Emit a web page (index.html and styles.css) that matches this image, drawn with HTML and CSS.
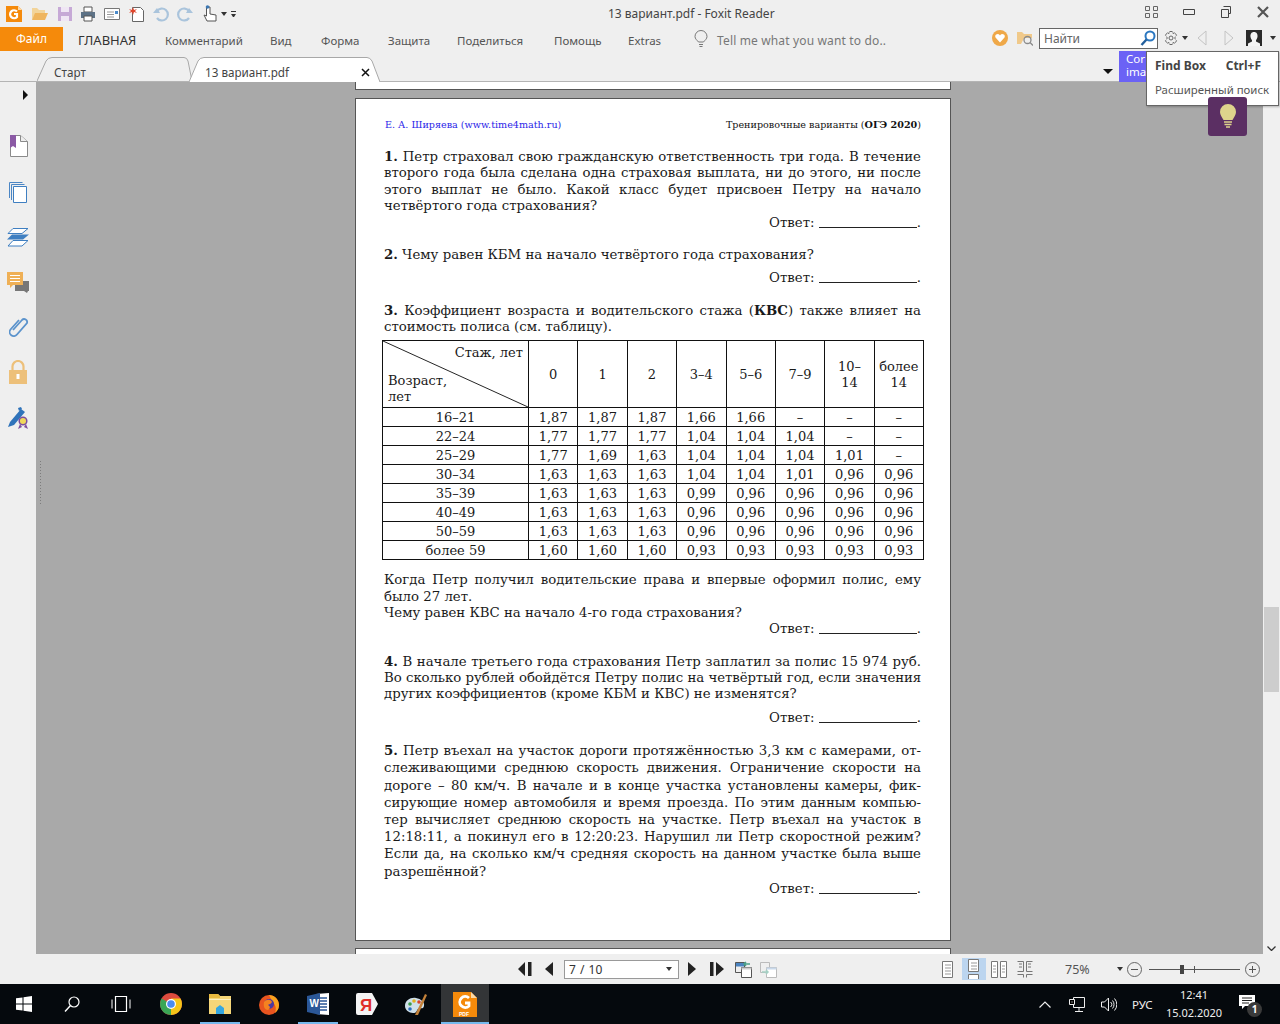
FILE: index.html
```html
<!DOCTYPE html>
<html lang="ru">
<head>
<meta charset="utf-8">
<title>13 вариант.pdf - Foxit Reader</title>
<link rel="stylesheet" href="styles.css">
</head>
<body>
<div class="app">
  <header class="titlebar">
    <div class="quick">
      <svg class="qi q-logo" viewBox="0 0 16 16"><path d="M0 0h12l4 4v12H0z" fill="#f58a0b"/><path d="M12 0l4 4h-4z" fill="#fbd9a8"/><path d="M11 5.500a4 4 0 1 0 0 5.500V8H8" fill="none" stroke="#fff" stroke-width="2.200"/></svg>
      <svg class="qi q-open" viewBox="0 0 16 16"><path d="M0 14V2h5l2 2h6v3H4z" fill="#f2d49a"/><path d="M0 14l3-7h13l-3 7z" fill="#efb55e"/></svg>
      <svg class="qi q-save" viewBox="0 0 16 16"><path d="M1 1h14v14H1z" fill="#c6a9d6"/><path d="M4 1h8v5H4zM4 10h8v5H4z" fill="#efe6f4"/></svg>
      <svg class="qi q-print" viewBox="0 0 16 16"><path d="M4 1h8v5H4z" fill="#fff" stroke="#555"/><path d="M1 6h14v6H1z" fill="#5d7286"/><path d="M4 10h8v5H4z" fill="#fff" stroke="#555"/></svg>
      <svg class="qi q-props" viewBox="0 0 16 16"><path d="M.500 2.500h15v11H.500z" fill="#fff" stroke="#777"/><path d="M3 6h7M3 8.500h7M3 11h7" stroke="#999"/><path d="M11 5h3v3h-3z" fill="#4b8bcb"/></svg>
      <svg class="qi q-new" viewBox="0 0 16 16"><path d="M3.500 1.500h8l3 3v11h-11z" fill="#fff" stroke="#666"/><path d="M4 1l1 3 3-1-2 2 2 2-3-1-1 3-1-3-3 1 2-2-2-2 3 1z" fill="#e0452c"/></svg>
      <svg class="qi q-undo" viewBox="0 0 16 16"><path d="M4 5a6 6 0 1 1 0 7" fill="none" stroke="#aac4dc" stroke-width="2.200"/><path d="M0 7h7L4 2z" fill="#aac4dc"/></svg>
      <svg class="qi q-redo" viewBox="0 0 16 16"><path d="M12 5a6 6 0 1 0 0 7" fill="none" stroke="#aac4dc" stroke-width="2.200"/><path d="M16 7H9l3-5z" fill="#aac4dc"/></svg>
      <svg class="qi q-hand" viewBox="0 0 17 17"><path d="M4.500 2v9L2 10l3 6h9v-6l-6-1V2z" fill="#fff" stroke="#555"/><circle cx="5.500" cy="2" r="1.800" fill="#3c78b4"/></svg>
      <i class="caret-down q-c1"></i>
      <i class="caret-bar"></i>
    </div>
    <div class="doc-title">13 вариант.pdf - Foxit Reader</div>
    <div class="winctl">
      <svg class="wi" viewBox="0 0 14 12"><path d="M.500.500h4v4h-4zM8.500.500h4v4h-4zM.500 7.500h4v4h-4zM8.500 7.500h4v4h-4z" fill="none" stroke="#666"/></svg>
      <svg class="wi" viewBox="0 0 14 12"><path d="M1.500 3.500h11v5h-11z" fill="none" stroke="#444"/></svg>
      <svg class="wi" viewBox="0 0 14 12"><path d="M4.500.500h7v7h-2M2.500 3.500h7v8h-7z" fill="none" stroke="#444"/></svg>
      <svg class="wi" viewBox="0 0 14 12"><path d="M2 1l10 10M12 1L2 11" stroke="#555" stroke-width="2.200" fill="none"/></svg>
    </div>
  </header>

  <nav class="ribbon">
    <div class="file-tab">Файл</div>
    <div class="rtab r1">ГЛАВНАЯ</div>
    <div class="rtab r2">Комментарий</div>
    <div class="rtab r3">Вид</div>
    <div class="rtab r4">Форма</div>
    <div class="rtab r5">Защита</div>
    <div class="rtab r6">Поделиться</div>
    <div class="rtab r7">Помощь</div>
    <div class="rtab r8">Extras</div>
    <svg class="tell-bulb" viewBox="0 0 14 18"><path d="M4.500 12C3 10 1 9 1 6.500a6 6 0 0 1 12 0C13 9 11 10 9.500 12zM5 14.500h4M5.500 16.500h3" fill="none" stroke="#777"/></svg>
    <div class="tell">Tell me what you want to do..</div>
    <div class="rib-right">
      <svg class="heart" viewBox="0 0 16 16"><circle cx="8" cy="8" r="8" fill="#efa848"/><path d="M8 12.500L3.500 7.500a2.400 2.400 0 0 1 4.500-2 2.400 2.400 0 0 1 4.500 2z" fill="#fff"/></svg>
      <svg class="fold" viewBox="0 0 16 16"><path d="M0 14V2h5l2 2h8v4H7l-3 6z" fill="#f0c98a"/><circle cx="10.500" cy="10" r="3.500" fill="none" stroke="#8a8a8a" stroke-width="1.300"/><path d="M13 12.500l3 3" stroke="#8a8a8a" stroke-width="1.300"/></svg>
      <div class="findbox"><span>Найти</span><svg viewBox="0 0 16 16"><circle cx="10" cy="6" r="4.500" fill="none" stroke="#2b77c0" stroke-width="2"/><path d="M6.500 9.500L1.500 15" stroke="#235f9c" stroke-width="2.400"/></svg></div>
      <svg class="gear" viewBox="0 0 14 16"><circle cx="7" cy="8" r="2" fill="none" stroke="#666"/><path d="M5.500 1.500h3l.5 2 2-.8 1.500 2.600L11 7v2l1.500 1.700L11 13.300l-2-.8-.5 2h-3l-.5-2-2 .8-1.500-2.600L3 9V7L1.500 5.300 3 2.700l2 .8z" fill="none" stroke="#666" stroke-dasharray="3 1"/></svg>
      <i class="caret-down c-gear"></i>
      <svg class="nav-l" viewBox="0 0 10 16"><path d="M9 1L1 8l8 7z" fill="none" stroke="#c4c4c4"/></svg>
      <svg class="nav-r" viewBox="0 0 10 16"><path d="M1 1l8 7-8 7z" fill="none" stroke="#c4c4c4"/></svg>
      <svg class="user" viewBox="0 0 16 16"><path d="M0 0h16v16H0z" fill="#2a2a2a"/><path d="M8 2c2.800 0 3.800 2.200 3.500 4.800-.2 1.500-.9 2.800-1.500 3.400v1.300l4 2v2.500H2v-2.500l4-2v-1.300c-.6-.6-1.300-1.900-1.500-3.400C4.200 4.200 5.200 2 8 2z" fill="#f4f4f4"/></svg>
      <i class="caret-down c-user"></i>
    </div>
  </nav>

  <div class="tabstrip">
    <div class="dtab dtab-idle">
      <svg class="tab-shape" viewBox="0 0 155 24" preserveAspectRatio="none"><path d="M0 24L9 4Q11 .5 15 .5H147Q150 .5 151 4L155 24" fill="#efefef" stroke="#a8a8a8"/></svg>
      <span>Старт</span>
    </div>
    <div class="dtab dtab-on">
      <svg class="tab-shape" viewBox="0 0 191 25" preserveAspectRatio="none"><path d="M0 25L9 4Q11 .5 15 .5H178Q181 .5 183 4L191 25" fill="#fff" stroke="#a8a8a8"/></svg>
      <span>13 вариант.pdf</span><svg class="tab-x" viewBox="0 0 9 9"><path d="M1 1l7 7M8 1L1 8" stroke="#111" stroke-width="1.500"/></svg>
    </div>
    <i class="caret-down c-tabs"></i>
  </div>

  <main class="workspace">
    <aside class="sidebar">
      <i class="side-arrow"></i>
      <svg class="si s1" viewBox="0 0 18 22"><path d="M.500.500h10l7 6v15H.500z" fill="#fff" stroke="#8a8a8a"/><path d="M10.500.500v6h7" fill="#eee" stroke="#8a8a8a"/><path d="M0 0h6v13l-3-2-3 2z" fill="#8b5aa5"/></svg>
      <svg class="si s2" viewBox="0 0 18 21"><path d="M.500 16V.500h13M2.500 18V2.500h13" fill="none" stroke="#4b86c5"/><path d="M4.500 4.500h13v16h-13z" fill="#fff" stroke="#3f7fc1"/></svg>
      <svg class="si s3" viewBox="0 0 22 19"><path d="M6 .500h15l-6 5H1z" fill="#fff" stroke="#3f7fc1"/><path d="M5 6.500h17l-6 5H0z" fill="#3f7fc1"/><path d="M6 12.500h15l-6 5.500H1z" fill="#fff" stroke="#3f7fc1"/></svg>
      <svg class="si s4" viewBox="0 0 22 21"><path d="M8 9h14v10h-1l-1 2-3-2H8z" fill="#777"/><path d="M0 0h16v13H6l-3 3v-3H0z" fill="#efb056"/><path d="M3 3.500h10M3 6.500h10M3 9.500h10" stroke="#fff"/></svg>
      <svg class="si s5" viewBox="0 0 20 21"><path d="M4 13L13 3a3 3 0 0 1 5 3L8 17.500a4 4 0 0 1-6.500-5L10 3" fill="none" stroke="#5b93cc" stroke-width="1.800"/></svg>
      <svg class="si s6" viewBox="0 0 18 24"><path d="M3.500 11V6.500a5.500 5.500 0 0 1 11 0V11" fill="none" stroke="#edc07a" stroke-width="2.200"/><path d="M0 10h18v14H0z" fill="#edc07a"/><path d="M7.500 14h3v5h-3z" fill="#fff"/></svg>
      <svg class="si s7" viewBox="0 0 20 22"><path d="M0 20l2-5L13 2l4 3L6 18z" fill="#2f73ba"/><path d="M10 1l3-1 1 2-3 2z" fill="#2f73ba"/><circle cx="15" cy="14" r="3.800" fill="#f0d85a" stroke="#7d4f9e" stroke-width="1.500"/><path d="M12 17l-2 5 4-2M18 17l2 5-4-2" fill="#7d4f9e"/></svg>
    </aside>
    <section class="canvas">
      <div class="grip"></div>
      <div class="page page-tail"></div>
      <article class="page page-main">
        <div class="runhead"><span class="rh-left">Е. А. Ширяева (www.time4math.ru)</span><span class="rh-right">Тренировочные варианты (<b>ОГЭ 2020</b>)</span></div>

        <div class="q q1">
          <p class="ln"><b>1.</b> Петр страховал свою гражданскую ответственность три года. В течение</p>
          <p class="ln">второго года была сделана одна страховая выплата, ни до этого, ни после</p>
          <p class="ln">этого выплат не было. Какой класс будет присвоен Петру на начало</p>
          <p class="ln end">четвёртого года страхования?</p>
        </div>
        <p class="ans">Ответ: <i class="blank"></i>.</p>

        <div class="q q2"><p class="ln end"><b>2.</b> Чему равен КБМ на начало четвёртого года страхования?</p></div>
        <p class="ans a2">Ответ: <i class="blank"></i>.</p>

        <div class="q q3">
          <p class="ln"><b>3.</b> Коэффициент возраста и водительского стажа (<b>КВС</b>) также влияет на</p>
          <p class="ln end">стоимость полиса (см. таблицу).</p>
        </div>

        <table class="kvs">
          <colgroup><col class="c0"><col span="8" class="cn"></colgroup>
          <thead>
            <tr>
              <th class="diag">
                <svg class="diag-line" viewBox="0 0 146 67" preserveAspectRatio="none"><path d="M0 0L146 67" stroke="#222" fill="none"/></svg>
                <span class="d-top">Стаж, лет</span>
                <span class="d-bot">Возраст,<br>лет</span>
              </th>
              <th>0</th><th>1</th><th>2</th><th>3–4</th><th>5–6</th><th>7–9</th><th>10–<br>14</th><th>более<br>14</th>
            </tr>
          </thead>
          <tbody>
            <tr><td>16–21</td><td>1,87</td><td>1,87</td><td>1,87</td><td>1,66</td><td>1,66</td><td>–</td><td>–</td><td>–</td></tr>
            <tr><td>22–24</td><td>1,77</td><td>1,77</td><td>1,77</td><td>1,04</td><td>1,04</td><td>1,04</td><td>–</td><td>–</td></tr>
            <tr><td>25–29</td><td>1,77</td><td>1,69</td><td>1,63</td><td>1,04</td><td>1,04</td><td>1,04</td><td>1,01</td><td>–</td></tr>
            <tr><td>30–34</td><td>1,63</td><td>1,63</td><td>1,63</td><td>1,04</td><td>1,04</td><td>1,01</td><td>0,96</td><td>0,96</td></tr>
            <tr><td>35–39</td><td>1,63</td><td>1,63</td><td>1,63</td><td>0,99</td><td>0,96</td><td>0,96</td><td>0,96</td><td>0,96</td></tr>
            <tr><td>40–49</td><td>1,63</td><td>1,63</td><td>1,63</td><td>0,96</td><td>0,96</td><td>0,96</td><td>0,96</td><td>0,96</td></tr>
            <tr><td>50–59</td><td>1,63</td><td>1,63</td><td>1,63</td><td>0,96</td><td>0,96</td><td>0,96</td><td>0,96</td><td>0,96</td></tr>
            <tr><td>более 59</td><td>1,60</td><td>1,60</td><td>1,60</td><td>0,93</td><td>0,93</td><td>0,93</td><td>0,93</td><td>0,93</td></tr>
          </tbody>
        </table>

        <div class="q q3b">
          <p class="ln">Когда Петр получил водительские права и впервые оформил полис, ему</p>
          <p class="ln end">было 27 лет.</p>
          <p class="ln end">Чему равен КВС на начало 4-го года страхования?</p>
        </div>
        <p class="ans a3b">Ответ: <i class="blank"></i>.</p>

        <div class="q q4">
          <p class="ln"><b>4.</b> В начале третьего года страхования Петр заплатил за полис 15 974 руб.</p>
          <p class="ln tight">Во сколько рублей обойдётся Петру полис на четвёртый год, если значения</p>
          <p class="ln end">других коэффициентов (кроме КБМ и КВС) не изменятся?</p>
        </div>
        <p class="ans a4">Ответ: <i class="blank"></i>.</p>

        <div class="q q5">
          <p class="ln"><b>5.</b> Петр въехал на участок дороги протяжённостью 3,3 км с камерами, от-</p>
          <p class="ln">слеживающими среднюю скорость движения. Ограничение скорости на</p>
          <p class="ln">дороге – 80 км/ч. В начале и в конце участка установлены камеры, фик-</p>
          <p class="ln">сирующие номер автомобиля и время проезда. По этим данным компью-</p>
          <p class="ln">тер вычисляет среднюю скорость на участке. Петр въехал на участок в</p>
          <p class="ln">12:18:11, а покинул его в 12:20:23. Нарушил ли Петр скоростной режим?</p>
          <p class="ln">Если да, на сколько км/ч средняя скорость на данном участке была выше</p>
          <p class="ln end">разрешённой?</p>
        </div>
        <p class="ans a5">Ответ: <i class="blank"></i>.</p>
      </article>
      <div class="page page-next"></div>
    </section>
    <div class="vscroll">
      <div class="vs-track"><div class="vs-thumb"></div></div>
      <svg class="vs-arrow" viewBox="0 0 9 5"><path d="M.500.500l4 4 4-4" fill="none" stroke="#333" stroke-width="1.300"/></svg>
    </div>
  </main>

  <footer class="statusbar">
    <svg class="pg p-first" viewBox="0 0 14 14"><path d="M7 0v14L0 7zM10 0h3.500v14H10z" fill="#222"/></svg>
    <svg class="pg p-prev" viewBox="0 0 8 14"><path d="M8 0v14L0 7z" fill="#222"/></svg>
    <div class="pagebox"><span>7 / 10</span><i class="caret-down"></i></div>
    <svg class="pg p-next" viewBox="0 0 8 14"><path d="M0 0v14l8-7z" fill="#222"/></svg>
    <svg class="pg p-last" viewBox="0 0 14 14"><path d="M0 0h3.500v14H0zM6 0v14l8-7z" fill="#222"/></svg>
    <svg class="pg p-back" viewBox="0 0 17 17"><path d="M.500 1.500h9v4h-9z" fill="#4a83c0"/><path d="M.500 1.500h9v10h-9z" fill="none" stroke="#555"/><path d="M6.500 6.500h10v10h-10z" fill="#fff" stroke="#555"/><path d="M6.500 6.500h10v2h-10z" fill="#ccc"/><path d="M15 3h-6M11 1L9 3l2 2" fill="none" stroke="#4aa088" stroke-width="1.500"/></svg>
    <svg class="pg p-fwd" viewBox="0 0 17 17"><path d="M.500 1.500h9v10h-9z" fill="none" stroke="#bbb"/><path d="M6.500 6.500h10v10h-10z" fill="#fff" stroke="#bbb"/><path d="M6.500 6.500h10v2h-10z" fill="#c8d8ea"/><path d="M2 11h6M6 9l2 2-2 2" fill="none" stroke="#a6d0c4" stroke-width="1.500"/></svg>
    <svg class="vw v1" viewBox="0 0 12 17"><path d="M.500.500h10v16h-10z" fill="#fff" stroke="#777"/><path d="M3 4h6M3 7h6M3 10h6M3 13h6" stroke="#999"/></svg>
    <div class="vw-on"><svg viewBox="0 0 12 20"><path d="M.500.500h10v12h-10zM.500 15.500h10v5h-10z" fill="#fff" stroke="#777"/><path d="M3 4h6M3 7h6M3 10h6" stroke="#999"/></svg></div>
    <svg class="vw v3" viewBox="0 0 16 17"><path d="M.500.500h6v16h-6zM9.500.500h6v16h-6z" fill="#fff" stroke="#777"/><path d="M2 5h3M2 8h3M2 11h3M11 5h3M11 8h3M11 11h3" stroke="#999"/></svg>
    <svg class="vw v4" viewBox="0 0 16 17"><path d="M.500.500h6v10h-6M15.500.500h-6v10h6M.500 13.500h6v3M15.500 13.500h-6v3M2 3h3M2 6h3M11 3h3M11 6h3" fill="none" stroke="#777"/></svg>
    <div class="zoomval">75%</div>
    <i class="caret-down c-zoom"></i>
    <svg class="zb" viewBox="0 0 15 15"><circle cx="7.500" cy="7.500" r="7" fill="none" stroke="#666"/><path d="M4 7.500h7" stroke="#555"/></svg>
    <div class="slider"><i class="knob"></i><i class="tick"></i></div>
    <svg class="zb zb-plus" viewBox="0 0 15 15"><circle cx="7.500" cy="7.500" r="7" fill="none" stroke="#666"/><path d="M4 7.500h7M7.500 4v7" stroke="#555"/></svg>
  </footer>

  <footer class="taskbar">
    <div class="tb-cell w48"><svg class="ti16" viewBox="0 0 16 16"><path d="M0 2.300L6.500 1.400v6.100H0zM7.500 1.300L16 0v7.500H7.500zM0 8.500h6.500v6.100L0 13.700zM7.500 8.500H16V16l-8.500-1.300z" fill="#fff"/></svg></div>
    <div class="tb-cell w48"><svg class="ti16" viewBox="0 0 16 16"><circle cx="10" cy="6" r="5" fill="none" stroke="#fff" stroke-width="1.200"/><path d="M6.500 9.500L1 15.500" stroke="#fff" stroke-width="1.400"/></svg></div>
    <div class="tb-cell w51"><svg class="ti20" viewBox="0 0 20 16"><path d="M4.500.500h11v15h-11z" fill="none" stroke="#fff" stroke-width="1.200"/><path d="M1 3.500v9M19 3.500v9" stroke="#fff"/></svg></div>
    <div class="tb-cell"><svg class="ti22" viewBox="0 0 22 22"><circle cx="11" cy="11" r="11" fill="#dd4b3e"/><path d="M11 11L1.500 5.500A11 11 0 0 0 11 22z" fill="#3aa655"/><path d="M11 11v11A11 11 0 0 0 20.500 5.500H11z" fill="#f5c518"/><circle cx="11" cy="11" r="5" fill="#fff"/><circle cx="11" cy="11" r="3.800" fill="#4a8bf0"/></svg></div>
    <div class="tb-cell running"><svg class="ti22" viewBox="0 0 22 22"><path d="M0 1h9l2 2h11v18H0z" fill="#f5d678"/><path d="M0 1h9l2 2v2H0z" fill="#e8b93f"/><path d="M0 6h22v1H0z" fill="#fdf0c0"/><path d="M7 15l4-3 4 3v6H7z" fill="#35a7e0"/></svg></div>
    <div class="tb-cell"><svg class="ti22" viewBox="0 0 22 22"><circle cx="11" cy="12" r="10" fill="#e8541f"/><path d="M11 2c5 0 10 4 10 10 0 4-2 6-4 8 2-5 0-9-3-12-1-2-2-4-3-6z" fill="#f9a21f"/><circle cx="11" cy="11" r="5" fill="#4a3aa0"/><path d="M6 9c2-3 7-3 8 0-1 2-3 2-4 3 2 1 3 3 0 5-3 0-5-3-4-8z" fill="#f58220"/></svg></div>
    <div class="tb-cell running"><svg class="ti22" viewBox="0 0 22 22"><path d="M9 1l13-1v22l-13-1z" fill="#fff"/><path d="M12 5h8M12 8h8M12 11h8M12 14h8M12 17h8" stroke="#2b5797" stroke-width="1.400"/><path d="M0 3l13-3v22L0 19z" fill="#2b5797"/><text x="2.500" y="14" class="word-w">W</text></svg></div>
    <div class="tb-cell"><svg class="ti22" viewBox="0 0 22 22"><path d="M2 0h14l6 11-6 11H2a2 2 0 0 1-2-2V2a2 2 0 0 1 2-2z" fill="#f4f4f4"/><text x="4" y="18" class="ya">Я</text></svg></div>
    <div class="tb-cell"><svg class="ti22" viewBox="0 0 22 22"><path d="M0 13C0 7 6 4 11 5s9 4 8 8-4 1-6 3-1 4-5 4-8-3-8-7z" fill="#cfe0ea"/><circle cx="5" cy="11" r="1.800" fill="#3a9c4a"/><circle cx="9" cy="8" r="1.800" fill="#e0b020"/><circle cx="14" cy="9" r="1.800" fill="#d8432f"/><circle cx="5" cy="16" r="1.800" fill="#2c6fc0"/><path d="M10 22L20 1l2 1-9 20z" fill="#c4823a"/></svg></div>
    <div class="tb-cell running active"><svg class="ti24" viewBox="0 0 24 25"><path d="M0 0h18l6 6v19H0z" fill="#f58a0b"/><path d="M18 0l6 6h-6z" fill="#fbd9a8"/><path d="M16 6a5.500 5.500 0 1 0 0 8v-3h-4" fill="none" stroke="#fff" stroke-width="2.800"/><text x="6" y="23.500" class="pdf-t">PDF</text></svg></div>
    <div class="tray">
      <svg class="tr-chev" viewBox="0 0 12 7"><path d="M.500 6.500L6 1l5.500 5.500" fill="none" stroke="#eee" stroke-width="1.200"/></svg>
      <svg class="tr-net" viewBox="0 0 16 15"><path d="M4.500.500h11v10h-11zM10 11v3M6 14.500h8" fill="none" stroke="#eee"/><path d="M0 2h6v6H0z" fill="#000"/><path d="M.500 2.500h5v5h-5zM3 4.500v1" fill="none" stroke="#eee"/></svg>
      <svg class="tr-vol" viewBox="0 0 16 15"><path d="M.500 5h3l4-4v13l-4-4h-3z" fill="none" stroke="#eee"/><path d="M9.500 5a3 3 0 0 1 0 5M11.500 3.500a6 6 0 0 1 0 8M13.500 1.500a9 9 0 0 1 0 12" fill="none" stroke="#eee"/></svg>
      <span class="tr-lang">РУС</span>
      <div class="clock"><span>12:41</span><span>15.02.2020</span></div>
      <div class="notif"><svg viewBox="0 0 16 15"><path d="M0 0h16v11H6l-3 3v-3H0z" fill="#fff"/><path d="M3 3h10M3 5.500h10M3 8h7" stroke="#222"/></svg><b class="badge">1</b></div>
    </div>
  </footer>

  <div class="promo">Cor<br>ima</div>
  <div class="findmenu">
    <div class="fm-row"><b>Find Box</b><b>Ctrl+F</b></div>
    <div class="fm-adv">Расширенный поиск</div>
  </div>
  <div class="tipbulb"><svg viewBox="0 0 16 26"><path d="M3.500 16C2 13 0 11 0 8a8 8 0 0 1 16 0c0 3-2 5-3.500 8z" fill="#ded38c"/><path d="M4 18h8M4.500 20.500h7M6 23h4" stroke="#ded38c" stroke-width="1.600"/></svg></div>
</div>
</body>
</html>
```

FILE: styles.css
```css
* { box-sizing: border-box; }
html, body { margin: 0; height: 100%; overflow: hidden; }
body { font-family: "Noto Sans", "DejaVu Sans", sans-serif; font-size: 12px; color: #444; background: #efefef; }
svg { display: block; flex: none; }
i { display: block; font-style: normal; }

.app { position: relative; display: flex; flex-direction: column; width: 1280px; height: 1024px; overflow: hidden; }

.caret-down { width: 0; height: 0; border-left: 4px solid transparent; border-right: 4px solid transparent; border-top: 4px solid #333; flex: none; }

/* Title bar */
.titlebar { display: flex; align-items: center; height: 27px; flex: none; background: #efefef; }
.quick { display: flex; align-items: center; width: 608px; height: 100%; flex: none; }
.qi { width: 16px; height: 16px; }
.q-logo { margin-left: 6px; }
.q-open { margin-left: 10px; }
.q-save { margin-left: 9px; }
.q-print { margin-left: 7px; }
.q-props { margin-left: 8px; }
.q-new { margin-left: 9px; }
.q-undo { margin-left: 8px; }
.q-redo { margin-left: 8px; }
.q-hand { margin-left: 9px; width: 17px; height: 17px; }
.q-c1 { margin-left: 2px; border-left-width: 3px; border-right-width: 3px; }
.caret-bar { width: 5px; height: 6px; margin-left: 4px; border-top: 1px solid #333; position: relative; }
.caret-bar::after { content: ""; display: block; margin-top: 2px; border-left: 2.500px solid transparent; border-right: 2.500px solid transparent; border-top: 3px solid #333; }
.doc-title { color: #444; white-space: nowrap; }
.winctl { margin-left: auto; display: flex; gap: 23px; padding-right: 10px; align-items: center; margin-top: -4px; }
.wi { width: 14px; height: 12px; }

/* Ribbon */
.ribbon { display: flex; align-items: center; height: 24px; flex: none; background: #efefef; }
.file-tab { width: 63px; height: 24px; line-height: 24px; text-align: center; background: #f58a0b; color: #fff; flex: none; }
.rtab { flex: none; white-space: nowrap; color: #555; font-size: 11.500px; padding-top: 2px; }
.r1 { width: 87px; margin-left: 15px; font-size: 13px; color: #333; }
.r2 { width: 105px; }
.r3 { width: 51px; }
.r4 { width: 67px; }
.r5 { width: 69px; }
.r6 { width: 97px; }
.r7 { width: 74px; }
.r8 { width: 66px; }
.tell-bulb { width: 14px; height: 18px; }
.tell { margin-left: 9px; color: #777; white-space: nowrap; letter-spacing: .15px; padding-top: 2px; }
.rib-right { display: flex; align-items: center; margin-left: auto; height: 100%; position: relative; top: -1px; }
.heart { width: 16px; height: 16px; }
.fold { width: 16px; height: 16px; margin-left: 9px; }
.findbox { width: 119px; height: 21px; margin-left: 6px; border: 1px solid #666; background: #fff; display: flex; align-items: center; justify-content: space-between; padding: 0 1px 0 4px; color: #666; }
.findbox svg { width: 16px; height: 16px; }
.gear { width: 14px; height: 16px; margin-left: 6px; }
.c-gear { margin-left: 4px; border-left-width: 3px; border-right-width: 3px; }
.nav-l { width: 10px; height: 16px; margin-left: 9px; }
.nav-r { width: 10px; height: 16px; margin-left: 17px; }
.user { width: 16px; height: 16px; margin-left: 12px; }
.c-user { margin-left: 8px; margin-right: 4px; border-left-width: 3px; border-right-width: 3px; }

/* Document tabs */
.tabstrip { display: flex; align-items: flex-end; height: 31px; flex: none; padding-left: 37px; background: #efefef; border-bottom: 1px solid #b4b4b4; position: relative; }
.dtab { position: relative; height: 24px; display: flex; align-items: center; color: #444; font-size: 11.700px; }
.tab-shape { position: absolute; left: 0; top: 0; width: 100%; height: 100%; }
.dtab > span, .tab-x { position: relative; }
.dtab-idle { width: 155px; padding: 5px 0 0 17px; }
.dtab-on { width: 191px; margin-left: -3px; padding: 4px 10px 0 16px; justify-content: space-between; margin-bottom: -1px; height: 25px; }
.tab-x { width: 9px; height: 9px; margin-top: 2px; }
.c-tabs { margin-left: 723px; margin-bottom: 7px; border-left-width: 5px; border-right-width: 5px; border-top-width: 5px; border-top-color: #111; }

/* Workspace */
.workspace { display: flex; flex: 1; min-height: 0; }
.sidebar { width: 36px; flex: none; background: #efefef; display: flex; flex-direction: column; }
.side-arrow { margin: 8px 0 0 23px; width: 0; height: 0; border-top: 5px solid transparent; border-bottom: 5px solid transparent; border-left: 5px solid #111; }
.si { width: 18px; height: 22px; }
.s1 { margin: 35px 0 0 10px; width: 18px; height: 22px; }
.s2 { margin: 25px 0 0 9px; width: 18px; height: 21px; }
.s3 { margin: 25px 0 0 7px; width: 22px; height: 19px; }
.s4 { margin: 25px 0 0 7px; width: 22px; height: 21px; }
.s5 { margin: 24px 0 0 9px; width: 20px; height: 21px; }
.s6 { margin: 22px 0 0 9px; width: 18px; height: 24px; }
.s7 { margin: 23px 0 0 8px; width: 20px; height: 22px; }

.canvas { flex: 1; min-width: 0; background: #a9a9a9; position: relative; overflow: hidden; display: flex; flex-direction: column; align-items: flex-start; padding-left: 319px; }
.grip { position: absolute; left: 3px; top: 378px; width: 3px; height: 44px; background-image: radial-gradient(circle, #7c7c7c 0.8px, transparent 1px); background-size: 3px 3px; }
.page { width: 596px; background: #fff; border: 1px solid #555; flex: none; }
.page-tail { height: 8px; border-top: 0; }
.page-main { height: 843px; margin-top: 8px; padding: 20px 29px 0 28px; font-family: "DejaVu Serif", "Liberation Serif", serif; font-size: 13.300px; color: #1a1a1a; }
.page-next { height: 60px; margin-top: 7px; }

.runhead { display: flex; justify-content: space-between; height: 12px; font-size: 9.600px; line-height: 12px; margin-bottom: 18px; white-space: nowrap; }
.rh-left { color: #2a1ee8; padding-left: 1px; }
.rh-right { color: #111; }

.q p, .ans { margin: 0; }
.ln { line-height: 16.400px; text-align: justify; text-align-last: justify; white-space: normal; }
.ln.end { text-align-last: left; }
.ln.tight { letter-spacing: -.1px; }
.ans { line-height: 16.400px; text-align: right; }
.blank { display: inline-block; width: 98px; height: 1px; background: #222; vertical-align: -1px; }
.q2 { margin-top: 15.600px; }
.a2 { margin-top: 6.600px; }
.q3 { margin-top: 16.600px; }
.q3b { margin-top: 12.500px; }
.a3b { margin-top: -1px; }
.q4 { margin-top: 16.600px; }
.a4 { margin-top: 6.800px; }
.q5 { margin-top: 16.200px; }
.q5 .ln { line-height: 17.200px; }
.a5 { margin-top: 1px; }

.kvs { border-collapse: collapse; table-layout: fixed; width: 541px; margin: 4.400px 0 0 -2px; font-size: 13px; color: #1a1a1a; }
.c0 { width: 146px; }
.cn { width: 49.375px; }
.kvs th, .kvs td { border: 1px solid #111; padding: 0; text-align: center; font-weight: 400; line-height: 16px; }
.kvs td { height: 18.900px; line-height: 17px; padding-top: 1px; }
.kvs thead th { height: 67px; padding-top: 2px; }
.diag { position: relative; }
.diag-line { position: absolute; left: 0; top: 0; width: 100%; height: 100%; }
.d-top { position: absolute; right: 5px; top: 4px; }
.d-bot { position: absolute; left: 5px; bottom: 2px; text-align: left; }

/* Scrollbar */
.vscroll { width: 17px; flex: none; background: #f0f0f0; display: flex; flex-direction: column; align-items: center; }
.vs-track { flex: 1; width: 100%; }
.vs-thumb { margin: 525px 1px 0; height: 85px; background: #cdcdcd; }
.vs-arrow { width: 9px; height: 5px; margin: 0 0 3px; }

/* Status bar */
.statusbar { display: flex; align-items: center; height: 30px; flex: none; background: #efefef; }
.pg { height: 14px; }
.p-first { width: 14px; margin-left: 518px; }
.p-prev { width: 8px; margin-left: 13px; }
.pagebox { width: 115px; height: 19px; margin-left: 11px; border: 1px solid #999; background: #fff; display: flex; align-items: center; justify-content: space-between; padding: 0 6px 0 4px; color: #333; word-spacing: 1px; }
.pagebox .caret-down { border-left-width: 3px; border-right-width: 3px; }
.p-next { width: 8px; margin-left: 9px; }
.p-last { width: 14px; margin-left: 14px; }
.p-back { width: 17px; height: 17px; margin-left: 11px; }
.p-fwd { width: 17px; height: 17px; margin-left: 8px; }
.vw { height: 17px; }
.v1 { width: 12px; margin-left: 165px; }
.vw-on { width: 24px; height: 22px; margin-left: 8px; background: #bcd5ef; display: flex; align-items: center; justify-content: center; }
.vw-on svg { width: 12px; height: 20px; }
.v3 { width: 16px; margin-left: 5px; }
.v4 { width: 16px; margin-left: 10px; }
.zoomval { margin-left: 32px; width: 52px; color: #555; font-size: 12.500px; }
.c-zoom { border-left-width: 3px; border-right-width: 3px; }
.zb { width: 15px; height: 15px; margin-left: 4px; }
.slider { width: 91px; height: 1px; margin-left: 7px; background: #555; position: relative; }
.knob { position: absolute; left: 31px; top: -4px; width: 4px; height: 9px; background: #444; }
.tick { position: absolute; left: 45px; top: -3px; width: 1px; height: 7px; background: #555; }
.zb-plus { margin-left: 5px; }

/* Taskbar */
.taskbar { display: flex; height: 40px; flex: none; background: #05090d; color: #eee; }
.tb-cell { position: relative; width: 49px; height: 40px; flex: none; display: flex; align-items: center; justify-content: center; padding-right: 2px; }
.w48 { width: 48px; padding-right: 0; }
.w51 { width: 51px; }
.running::after { content: ""; position: absolute; left: 4px; right: 5px; bottom: 0; height: 2px; background: #76b9ed; }
.active { background: #333537; width: 48px; padding-right: 0; }
.active::after { left: 0; right: 0; }
.ti16 { width: 16px; height: 16px; }
.ti20 { width: 20px; height: 16px; }
.ti22 { width: 22px; height: 22px; }
.ti24 { width: 24px; height: 25px; }
.word-w { font-family: "Liberation Sans", sans-serif; font-weight: 700; font-size: 10px; fill: #fff; }
.ya { font-family: "Liberation Sans", sans-serif; font-weight: 700; font-size: 17px; fill: #e0302a; }
.pdf-t { font-family: "Liberation Sans", sans-serif; font-weight: 700; font-size: 5px; fill: #fff; }
.tray { margin-left: auto; display: flex; align-items: center; height: 100%; font-size: 12px; }
.tr-chev { width: 12px; height: 7px; }
.tr-net { width: 16px; height: 15px; margin-left: 18px; }
.tr-vol { width: 16px; height: 15px; margin-left: 16px; }
.tr-lang { margin-left: 15px; width: 26px; font-size: 11.500px; }
.clock { margin-left: 1px; width: 70px; display: flex; flex-direction: column; align-items: center; line-height: 18px; font-size: 11px; }
.notif { position: relative; margin: -4px 25px 0 10px; width: 16px; height: 15px; }
.notif svg { width: 16px; height: 15px; }
.badge { position: absolute; left: 8px; top: 7px; width: 15px; height: 15px; border-radius: 50%; background: #3a3a3a; color: #fff; font-size: 10px; line-height: 15px; text-align: center; }

/* Overlays */
.promo { position: absolute; left: 1119px; top: 51px; width: 27px; height: 31px; padding: 1px 0 0 7px; background: #6b62f5; color: #fff; line-height: 13px; overflow: hidden; font-size: 11.500px; }
.findmenu { position: absolute; left: 1146px; top: 51px; width: 133px; height: 55px; background: #fff; border: 1px solid #666; padding: 6px 8px 0 8px; box-shadow: 1px 1px 2px rgba(0,0,0,.25); white-space: nowrap; }
.fm-row { display: flex; justify-content: space-between; color: #444; height: 24px; line-height: 16px; padding-right: 9px; }
.fm-adv { color: #555; line-height: 16px; font-size: 11.400px; }
.tipbulb { position: absolute; left: 1208px; top: 97px; width: 39px; height: 39px; background: #5b2f63; border-radius: 3px; display: flex; align-items: center; justify-content: center; }
.tipbulb svg { width: 16px; height: 26px; }
```
